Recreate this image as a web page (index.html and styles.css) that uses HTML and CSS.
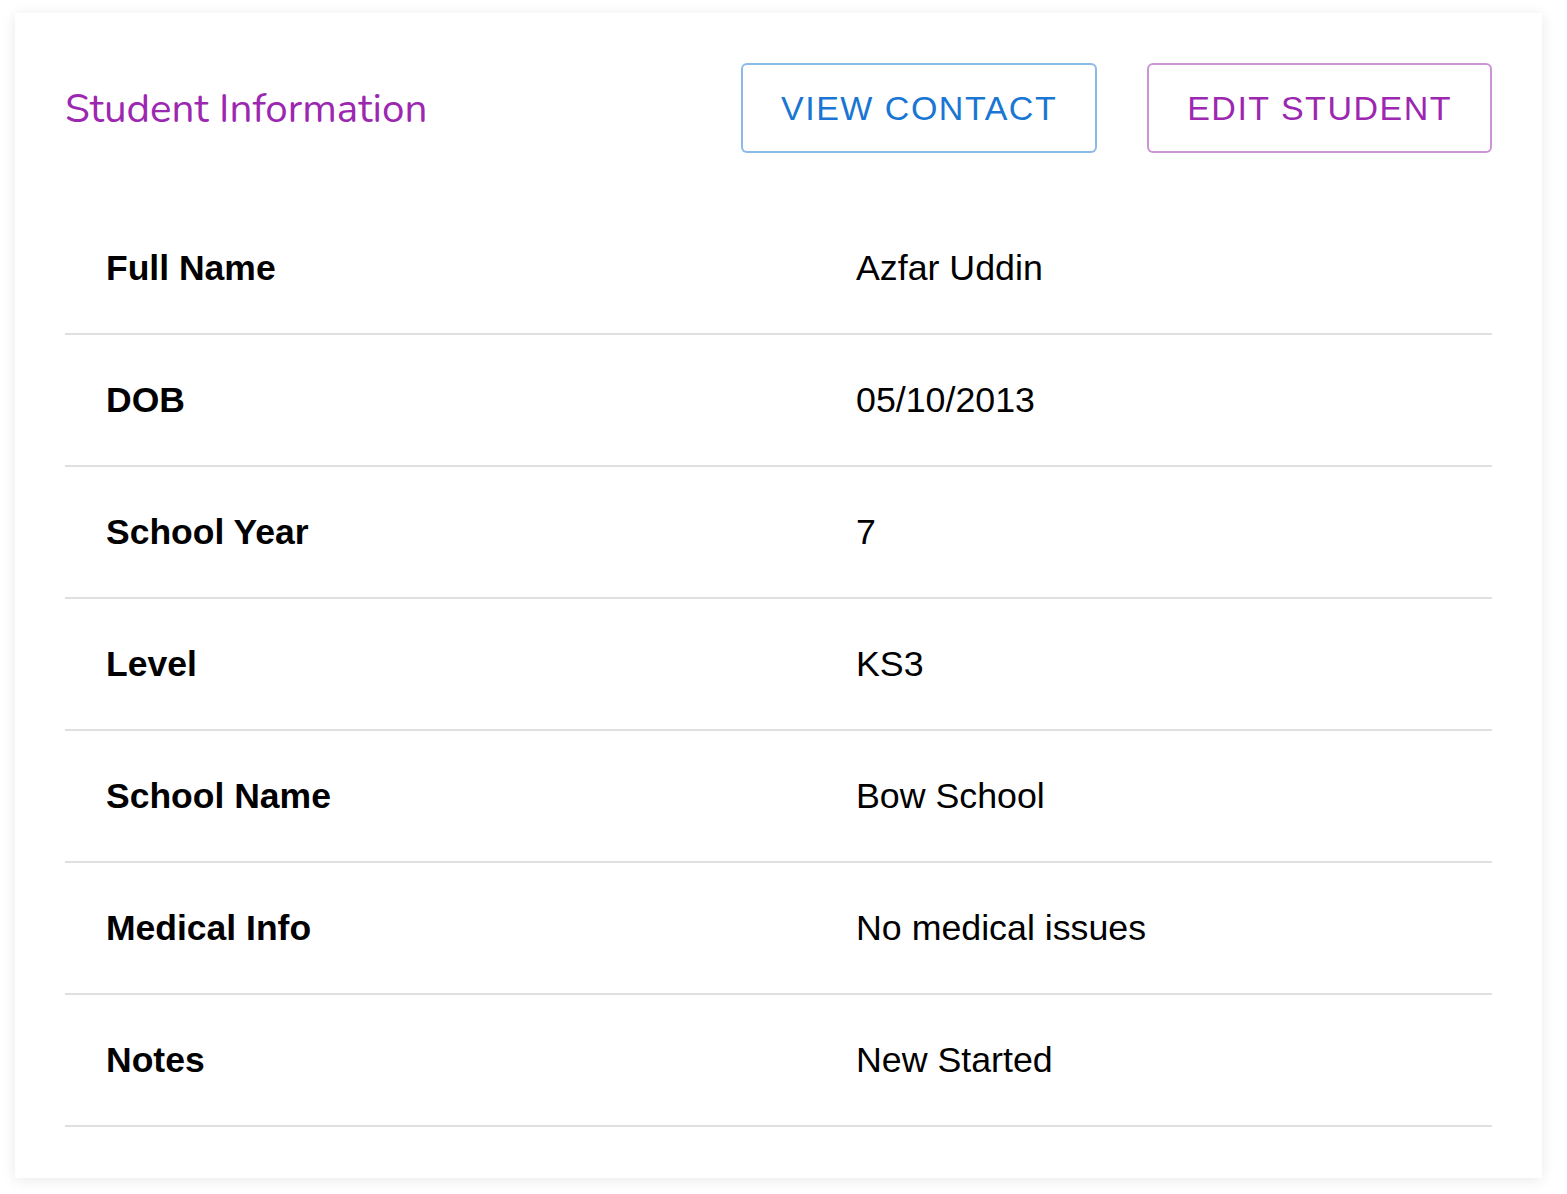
FILE: index.html
```html
<!DOCTYPE html>
<html>
<head>
<meta charset="utf-8">
<link rel="stylesheet" href="styles.css">
</head>
<body>
<div class="card">
  <div class="header">
    <h2 class="title">Student Information</h2>
    <div class="actions">
      <button class="btn btn-blue">VIEW CONTACT</button>
      <button class="btn btn-purple">EDIT STUDENT</button>
    </div>
  </div>
  <table class="info">
    <tbody>
      <tr><th>Full Name</th><td>Azfar Uddin</td></tr>
      <tr><th>DOB</th><td>05/10/2013</td></tr>
      <tr><th>School Year</th><td>7</td></tr>
      <tr><th>Level</th><td>KS3</td></tr>
      <tr><th>School Name</th><td>Bow School</td></tr>
      <tr><th>Medical Info</th><td>No medical issues</td></tr>
      <tr><th>Notes</th><td>New Started</td></tr>
    </tbody>
  </table>
</div>
</body>
</html>
```

FILE: styles.css
```css
html, body {
  margin: 0;
  padding: 0;
  background: #ffffff;
}
body {
  padding: 13px 25px 16px 15px;
  font-family: "Liberation Sans", Arial, sans-serif;
}
.card {
  background: #fff;
  box-shadow: 0 2px 14px rgba(0, 0, 0, 0.09);
  padding: 50px 50px 51px 50px;
}
.header {
  display: flex;
  align-items: center;
  justify-content: space-between;
  height: 90px;
  margin-bottom: 50px;
}
.title {
  margin: 0;
  font-family: "Nunito", "Lato", "Open Sans", sans-serif;
  font-weight: 400;
  font-size: 40.4px;
  color: #9c27b0;
}
.actions {
  display: flex;
  gap: 50px;
}
.btn {
  height: 90px;
  padding: 0 38px;
  background: #fff;
  border-radius: 6px;
  font-family: "Liberation Sans", Arial, sans-serif;
  font-size: 34px;
  letter-spacing: 1.5px;
  cursor: pointer;
}
.btn-blue {
  color: #1976d2;
  border: 2px solid rgba(25, 118, 210, 0.5);
}
.btn-purple {
  color: #9c27b0;
  border: 2px solid rgba(156, 39, 176, 0.5);
}
.info {
  width: 100%;
  border-collapse: collapse;
}
.info tr {
  border-bottom: 2px solid #e0e0e0;
}
.info th,
.info td {
  height: 130px;
  padding: 0;
  text-align: left;
  color: #000;
  vertical-align: middle;
}
.info th {
  font-weight: 700;
  font-size: 35.5px;
  padding-left: 41px;
  width: 750px;
}
.info td {
  font-weight: 400;
  font-size: 35.75px;
}
```
